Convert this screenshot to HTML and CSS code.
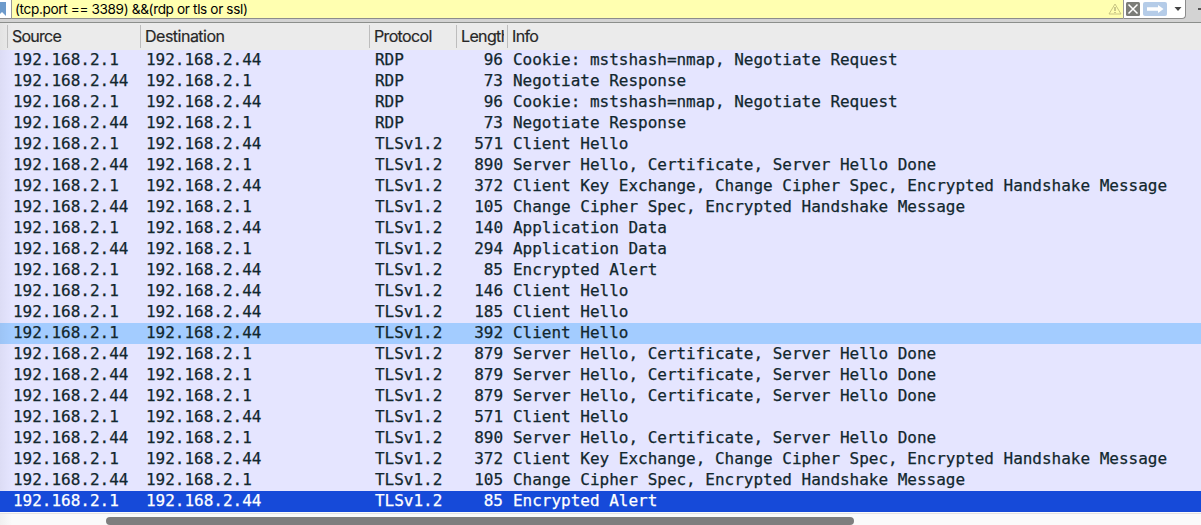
FILE: index.html
```html
<!DOCTYPE html>
<html lang="en">
<head>
<meta charset="utf-8">
<title>Packet list</title>
<link rel="stylesheet" href="styles.css">
</head>
<body>
<div class="filter">
  <div class="bookmark"><svg width="7" height="17" viewBox="0 0 7 17"><path d="M0 2H6V16L2 12L0 14Z" fill="#6d9acb"/></svg></div>
  <div class="field"><span class="expr">(tcp.port == 3389) &amp;&amp;(rdp or tls or ssl)</span>
    <svg class="warn" width="14" height="12" viewBox="0 0 14 12"><path d="M7 1L13 11H1Z" fill="none" stroke="#c9c583"/><path d="M7 4V8M7 9V10" stroke="#b5b17a" stroke-width="1.4"/></svg>
  </div>
  <div class="actions">
    <svg width="62" height="18" viewBox="0 0 62 18"><rect x="2" y="2" width="14" height="14" rx="1.5" fill="#7b7c78"/><path d="M4.5 4.5L13.5 13.5M13.5 4.5L4.5 13.5" stroke="#fff" stroke-width="1.5"/><rect x="19" y="2" width="24" height="14" rx="2" fill="#b5cce8"/><path d="M23 7.2H34V5L39.5 9L34 13V10.8H23Z" fill="#fff"/><path d="M50.5 7H57.5L54 11Z" fill="#444"/></svg>
  </div>
  <div class="extra"><i></i></div>
</div>
<div class="gutter"></div>
<div class="head"><span></span><span><b class="h-src">Source</b></span><span><b class="h-dst">Destination</b></span><span><b class="h-pro">Protocol</b></span><span class="clip"><b class="h-len">Length</b></span><span><b class="h-info">Info</b></span></div>
<div class="list" id="list"></div>
<div class="scroll"><div class="thumb"></div></div>
<script src="packets.js"></script>
</body>
</html>
```
FILE: styles.css
```css
* { box-sizing: border-box; }
body { margin: 0; width: 1201px; height: 525px; overflow: hidden; background: #fafafa; font-family: Inter, "Liberation Sans", sans-serif; }
.filter { display: flex; height: 19px; background: #d3d3d3; }
.filter > div { border-bottom: 1px solid #8c8c8c; }
.bookmark { width: 12px; background: #fff; border-right: 1px solid #999; }
.bookmark svg, .actions svg { display: block; }
.field { width: 1111px; background: #ffffb0; display: flex; align-items: center; justify-content: space-between; padding: 0 1px 0 3px; }
.expr { font-size: 13.6px; line-height: 18px; letter-spacing: -0.36px; color: #000; white-space: pre; }
.actions { width: 63px; background: #fff; border-left: 1px solid #999; border-right: 1px solid #8c8c8c; border-radius: 0 0 4px 0; }
.filter .extra { flex: 1; border: 0; padding: 8px 0 0 12px; }
.extra i { display: block; height: 2px; background: #555; }
.gutter { height: 4px; background: #d3d3d3; border-bottom: 1px solid #8b8e8b; }
.head { display: grid; grid-template-columns: 7px 133px 229px 87px 51px 1fr; height: 27px; background: linear-gradient(90deg, #e3e3e3, #ebebeb 12px); padding-top: 2px; }
.head span { height: 23px; padding-left: 4px; border-left: 1px solid #bdbdbd; white-space: nowrap; }
.head span:first-child { border: 0; }
.head b { display: inline-block; font-weight: 400; font-size: 16px; line-height: 23px; color: #272727; -webkit-text-stroke: 0.2px; }
.head .clip { overflow: hidden; border-right: 3px solid #ebebeb; }
.h-src { letter-spacing: -0.75px; }
.h-dst { letter-spacing: -0.5px; }
.h-pro, .h-len, .h-info { letter-spacing: -0.65px; }
.row { display: grid; grid-template-columns: 133px 229px 87px 41px 1fr; height: 21px; padding-left: 13px; background: linear-gradient(90deg, rgba(0,0,0,.04), rgba(0,0,0,0) 12px) #e5e5ff; color: #12272e; font: 16px/20px "DejaVu Sans Mono", monospace; letter-spacing: -0.015px; -webkit-text-stroke: 0.25px; white-space: pre; }
.row .len { text-align: right; }
.row .info { padding-left: 10px; }
.row.related { background-color: #a3ccff; }
.row.selected { background: #164ad9; color: #fff; }
.scroll { height: 13px; margin-top: 1px; border-top: 1px solid #e2e2e2; background: linear-gradient(90deg, #f0f0f0, #fafafa 12px); padding: 3px 0 0 106px; }
.thumb { width: 748px; height: 8px; border-radius: 4px; background: #7e7e7e; }
```
FILE: packets.js
```js
const A = "192.168.2.1", B = "192.168.2.44";
const cookie = "Cookie: mstshash=nmap, Negotiate Request";
const hello = "Server Hello, Certificate, Server Hello Done";
const kex = "Client Key Exchange, Change Cipher Spec, Encrypted Handshake Message";
const ccs = "Change Cipher Spec, Encrypted Handshake Message";
const packets = [
  [A, "RDP", 96, cookie], [B, "RDP", 73, "Negotiate Response"],
  [A, "RDP", 96, cookie], [B, "RDP", 73, "Negotiate Response"],
  [A, "TLSv1.2", 571, "Client Hello"], [B, "TLSv1.2", 890, hello],
  [A, "TLSv1.2", 372, kex], [B, "TLSv1.2", 105, ccs],
  [A, "TLSv1.2", 140, "Application Data"], [B, "TLSv1.2", 294, "Application Data"],
  [A, "TLSv1.2", 85, "Encrypted Alert"], [A, "TLSv1.2", 146, "Client Hello"],
  [A, "TLSv1.2", 185, "Client Hello"], [A, "TLSv1.2", 392, "Client Hello", "related"],
  [B, "TLSv1.2", 879, hello], [B, "TLSv1.2", 879, hello], [B, "TLSv1.2", 879, hello],
  [A, "TLSv1.2", 571, "Client Hello"], [B, "TLSv1.2", 890, hello],
  [A, "TLSv1.2", 372, kex], [B, "TLSv1.2", 105, ccs],
  [A, "TLSv1.2", 85, "Encrypted Alert", "selected"]
];
document.getElementById("list").innerHTML = packets.map(([src, proto, len, info, state]) =>
  `<div class="row ${state || ""}"><span>${src}</span><span>${src === A ? B : A}</span><span>${proto}</span><span class="len">${len}</span><span class="info">${info}</span></div>`
).join("");
```
